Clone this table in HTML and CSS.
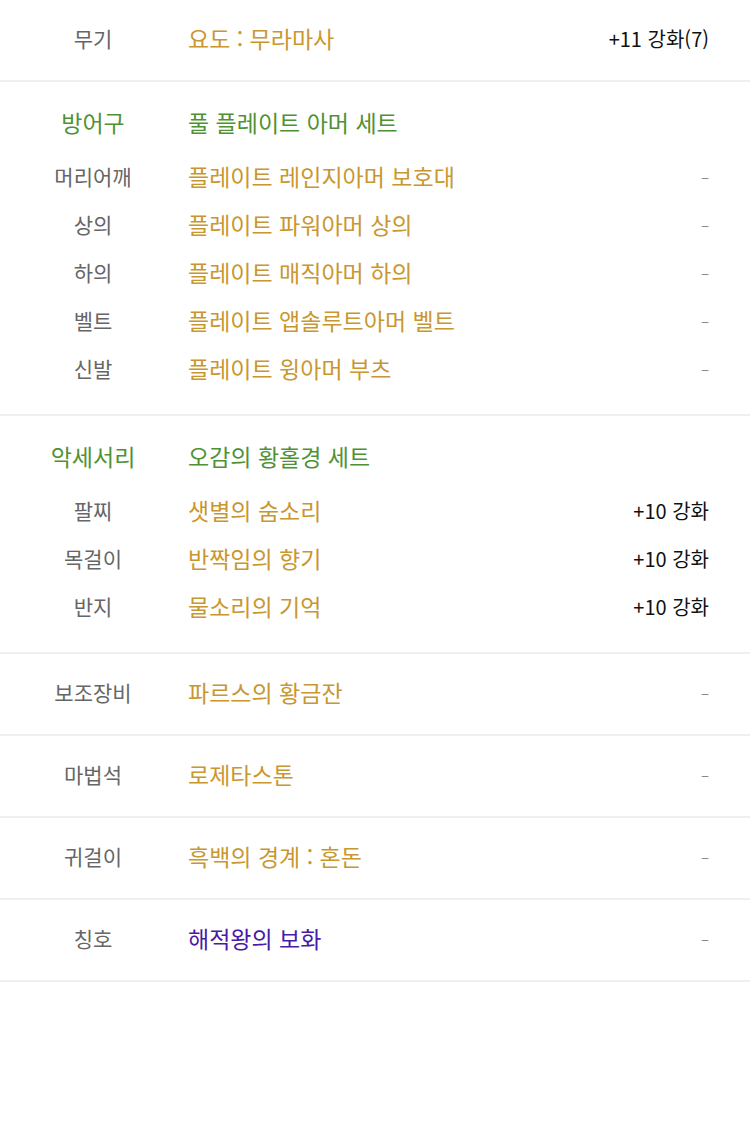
FILE: index.html
```html
<!DOCTYPE html>
<html lang="ko">
<head>
    <meta charset="UTF-8">
    <meta name="viewport" content="width=device-width, initial-scale=1.0">
    <title>장비</title>
    <link rel="stylesheet" href="styles.css">
</head>
<body>
    <div class="equip">
        <div class="row single">
            <span class="label">무기</span>
            <span class="name">요도 : 무라마사</span>
            <span class="value">+11 강화(7)</span>
        </div>

        <div class="section">
            <div class="row set">
                <span class="label">방어구</span>
                <span class="name">풀 플레이트 아머 세트</span>
            </div>
            <div class="row">
                <span class="label">머리어깨</span>
                <span class="name">플레이트 레인지아머 보호대</span>
                <span class="value dash">–</span>
            </div>
            <div class="row">
                <span class="label">상의</span>
                <span class="name">플레이트 파워아머 상의</span>
                <span class="value dash">–</span>
            </div>
            <div class="row">
                <span class="label">하의</span>
                <span class="name">플레이트 매직아머 하의</span>
                <span class="value dash">–</span>
            </div>
            <div class="row">
                <span class="label">벨트</span>
                <span class="name">플레이트 앱솔루트아머 벨트</span>
                <span class="value dash">–</span>
            </div>
            <div class="row">
                <span class="label">신발</span>
                <span class="name">플레이트 윙아머 부츠</span>
                <span class="value dash">–</span>
            </div>
        </div>

        <div class="section">
            <div class="row set">
                <span class="label">악세서리</span>
                <span class="name">오감의 황홀경 세트</span>
            </div>
            <div class="row">
                <span class="label">팔찌</span>
                <span class="name">샛별의 숨소리</span>
                <span class="value">+10 강화</span>
            </div>
            <div class="row">
                <span class="label">목걸이</span>
                <span class="name">반짝임의 향기</span>
                <span class="value">+10 강화</span>
            </div>
            <div class="row">
                <span class="label">반지</span>
                <span class="name">물소리의 기억</span>
                <span class="value">+10 강화</span>
            </div>
        </div>

        <div class="row single">
            <span class="label">보조장비</span>
            <span class="name">파르스의 황금잔</span>
            <span class="value dash">–</span>
        </div>
        <div class="row single">
            <span class="label">마법석</span>
            <span class="name">로제타스톤</span>
            <span class="value dash">–</span>
        </div>
        <div class="row single">
            <span class="label">귀걸이</span>
            <span class="name">흑백의 경계 : 혼돈</span>
            <span class="value dash">–</span>
        </div>
        <div class="row single">
            <span class="label">칭호</span>
            <span class="name title">해적왕의 보화</span>
            <span class="value dash">–</span>
        </div>
    </div>
</body>
</html>
```

FILE: styles.css
```css
body {
    margin: 0;
    padding: 0;
    background-color: #fff;
    font-family: "Noto Sans CJK KR", "Noto Sans", sans-serif;
}
.equip {
    width: 750px;
}
.row {
    display: grid;
    grid-template-columns: 186px 1fr auto;
    align-items: center;
    box-sizing: border-box;
    height: 48px;
    padding: 0 41px 4px 0;
}
.row.single {
    height: 82px;
    border-bottom: 2px solid #efefef;
}
.section {
    padding: 18px 0 20px;
    border-bottom: 2px solid #efefef;
}
.row.set {
    margin-bottom: 6px;
}
.label {
    text-align: center;
    font-size: 21px;
    color: #666;
}
.name {
    padding-left: 2px;
    font-size: 23px;
    color: #c9972f;
}
.set .label,
.set .name {
    color: #4f9233;
    font-size: 23px;
}
.name.title {
    color: #4a1aa8;
}
.value {
    font-size: 20px;
    color: #111;
}
.value.dash {
    color: #888;
    font-size: 15px;
}
```
